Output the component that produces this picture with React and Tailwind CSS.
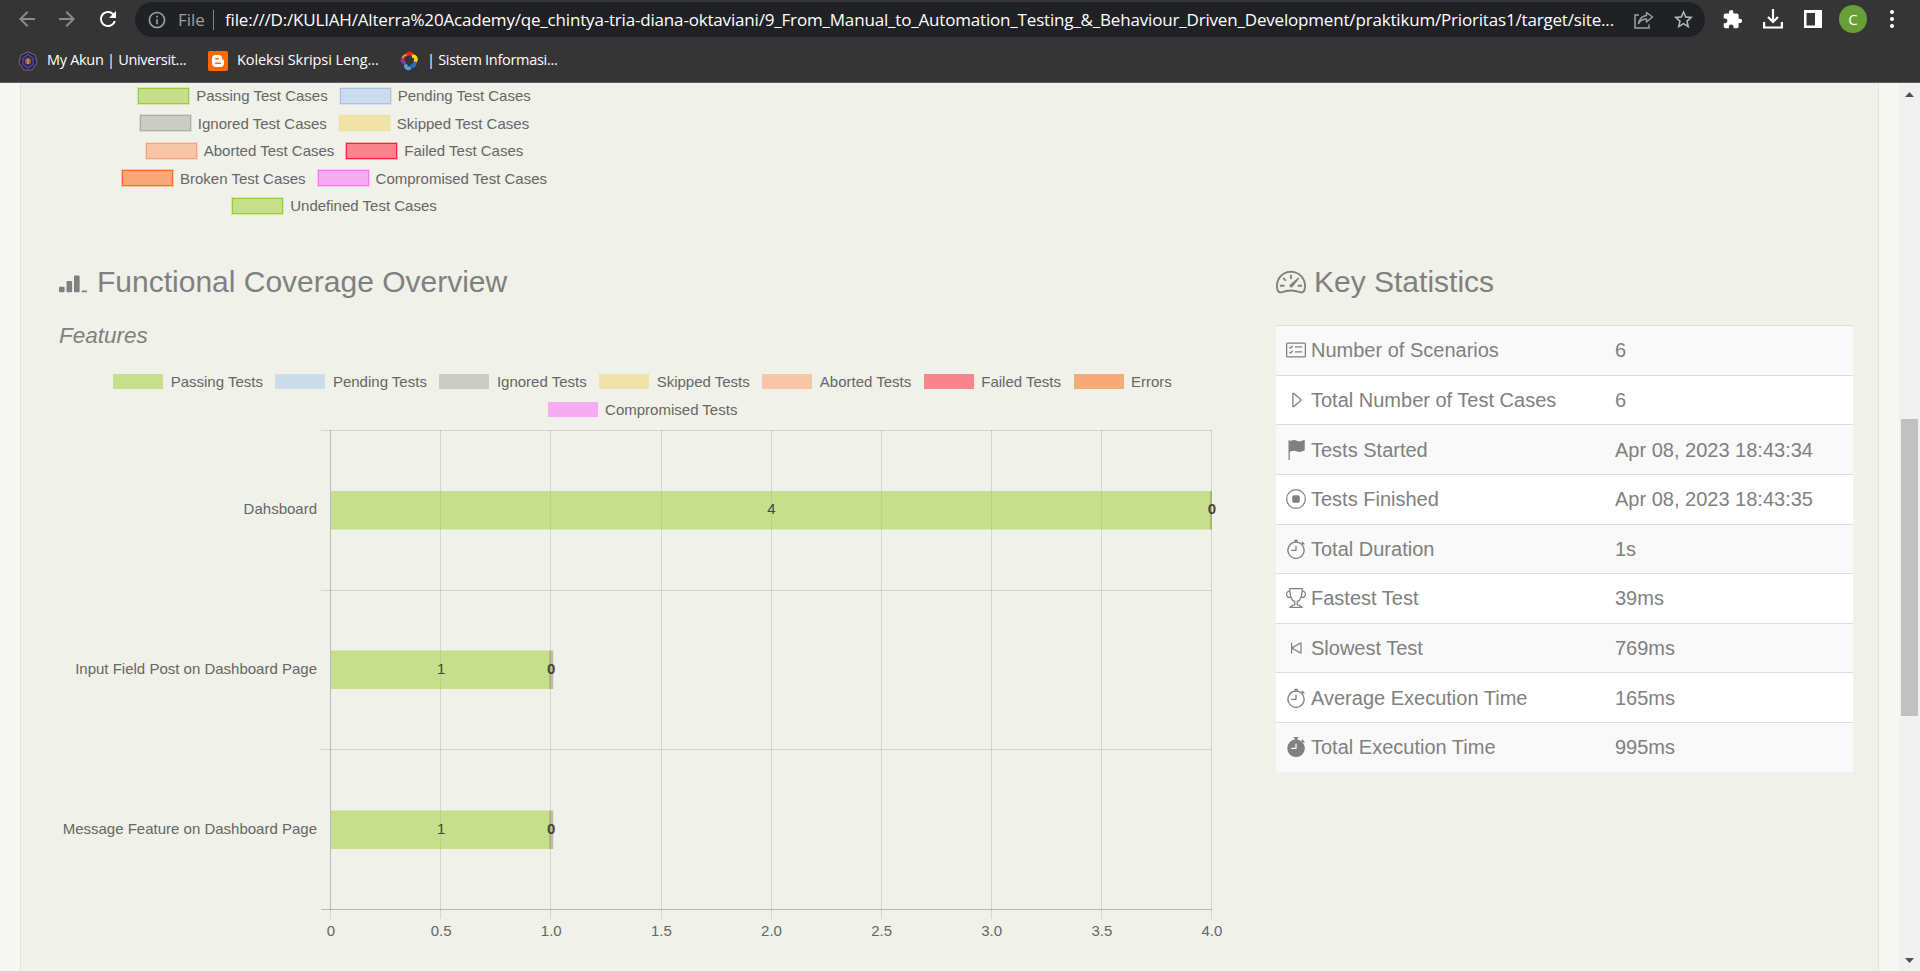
import React from "react";
import {
  BsReception3,
  BsSpeedometer2,
  BsCardChecklist,
  BsCaretRight,
  BsFlagFill,
  BsStopwatch,
  BsStopwatchFill,
  BsTrophy,
  BsSkipStart,
} from "react-icons/bs";
import {
  MdArrowBack,
  MdArrowForward,
  MdRefresh,
  MdInfoOutline,
  MdStarBorder,
  MdExtension,
} from "react-icons/md";

const caseLegend = [
  [
    ["Passing Test Cases", "bg-[#c6df8d] border-[#9acd32] outline-[#9acd32]/30"],
    ["Pending Test Cases", "bg-[#cbdcea] border-[#a4c4ee] outline-[#a4c4ee]/30"],
  ],
  [
    ["Ignored Test Cases", "bg-[#cbccc6] border-[#acada9] outline-[#acada9]/30"],
    ["Skipped Test Cases", "bg-[#efe3a9] border-[#eee2a0] outline-[#eee2a0]/30"],
  ],
  [
    ["Aborted Test Cases", "bg-[#f8c5a7] border-[#ffa070] outline-[#ffa070]/30"],
    ["Failed Test Cases", "bg-[#f8858e] border-[#ff1f3a] outline-[#ff1f3a]/30"],
  ],
  [
    ["Broken Test Cases", "bg-[#f8a978] border-[#ff6a13] outline-[#ff6a13]/30"],
    ["Compromised Test Cases", "bg-[#f7abf2] border-[#ff70ff] outline-[#ff70ff]/30"],
  ],
  [["Undefined Test Cases", "bg-[#c6df8d] border-[#9acd32] outline-[#9acd32]/30"]],
];

const testLegend = [
  [
    ["Passing Tests", "bg-[#c6df8d]"],
    ["Pending Tests", "bg-[#cbdcea]"],
    ["Ignored Tests", "bg-[#cbccc6]"],
    ["Skipped Tests", "bg-[#efe3a9]"],
    ["Aborted Tests", "bg-[#f8c5a7]"],
    ["Failed Tests", "bg-[#f8858e]"],
    ["Errors", "bg-[#f8a978]"],
  ],
  [["Compromised Tests", "bg-[#f7abf2]"]],
];

function StopCircle(props) {
  return (
    <svg viewBox="0 0 16 16" width="1em" height="1em" fill="currentColor" {...props}>
      <path d="M8 15A7 7 0 1 1 8 1a7 7 0 0 1 0 14zm0 1A8 8 0 1 0 8 0a8 8 0 0 0 0 16z" />
      <path d="M5 6.5A1.5 1.5 0 0 1 6.500 5h3A1.500 1.500 0 0 1 11 6.500v3A1.500 1.500 0 0 1 9.500 11h-3A1.500 1.500 0 0 1 5 9.500v-3z" />
    </svg>
  );
}

const stats = [
  [BsCardChecklist, "Number of Scenarios", "6"],
  [BsCaretRight, "Total Number of Test Cases", "6"],
  [BsFlagFill, "Tests Started", "Apr 08, 2023 18:43:34"],
  [StopCircle, "Tests Finished", "Apr 08, 2023 18:43:35"],
  [BsStopwatch, "Total Duration", "1s"],
  [BsTrophy, "Fastest Test", "39ms"],
  [BsSkipStart, "Slowest Test", "769ms"],
  [BsStopwatch, "Average Execution Time", "165ms"],
  [BsStopwatchFill, "Total Execution Time", "995ms"],
];

function Toolbar() {
  return (
    <div className="flex h-[39px] items-center pb-px">
      <div className="flex w-[135px] items-center pl-[15px] text-[24px]">
        <MdArrowBack className="text-[#8b8b8b]" />
        <MdArrowForward className="ml-4 text-[#8b8b8b]" />
        <MdRefresh className="ml-[17px] text-white" />
      </div>
      <div className="mt-px flex h-[35px] w-[1570px] items-center rounded-full bg-[#202124] pl-[12px]">
        <MdInfoOutline className="shrink-0 text-[20px] text-[#9aa0a6]" />
        <span className="ml-[11px] w-[35px] shrink-0 text-[17px] leading-none text-[#9aa0a6]">File</span>
        <span className="h-5 w-px shrink-0 bg-[#80868b]" />
        <span className="ml-[11px] w-[1394px] shrink-0 whitespace-nowrap text-[17px] leading-none tracking-[-0.18px] text-white">
          file:///D:/KULIAH/Alterra%20Academy/qe_chintya-tria-diana-oktaviani/9_From_Manual_to_Automation_Testing_&amp;_Behaviour_Driven_Development/praktikum/Prioritas1/target/site...
        </span>
        <svg width="20" height="18" viewBox="0 0 20 18" fill="none" stroke="#9aa0a6" strokeWidth="1.5" className="ml-[15px] shrink-0">
          <path d="M5 4H1v13h14v-3.500" />
          <path d="M12.500 1.500 18.500 6l-6 5V8C9 8 6.500 9.500 4.500 12.500 5.500 8 8 5 12.500 4.500z" strokeLinejoin="round" />
        </svg>
        <MdStarBorder className="ml-[18px] shrink-0 text-[23px] text-[#b5b8bc]" />
      </div>
      <div className="flex flex-1 items-center text-white">
        <MdExtension className="ml-[17px] text-[21px]" />
        <svg width="20" height="20" viewBox="0 0 20 20" fill="none" stroke="white" strokeWidth="2.200" className="ml-[20px]">
          <path d="M10 0v13M5 8l5 5 5-5M1.100 13v5.500h17.800V13" />
        </svg>
        <svg width="18" height="18" viewBox="0 0 18 18" className="ml-[21px]">
          <path d="M0 0h18v18H0zM2.500 3v12.500H11V3z" fill="white" fillRule="evenodd" />
        </svg>
        <span className="ml-[17px] flex size-7 items-center justify-center rounded-full bg-[#689f38] text-[15px]">C</span>
        <svg width="6" height="20" viewBox="0 0 6 20" fill="white" className="ml-[22px]">
          <circle cx="3" cy="3" r="2" />
          <circle cx="3" cy="10" r="2" />
          <circle cx="3" cy="17" r="2" />
        </svg>
      </div>
    </div>
  );
}

function Bookmarks() {
  return (
    <div className="flex h-[43px] items-center text-[14.5px] leading-none tracking-[-0.3px] whitespace-nowrap text-white">
      <div className="ml-[18px] flex w-[190px] items-center gap-[9px]">
        <svg width="20" height="20" viewBox="0 0 20 20">
          <path d="M10 .8 17.500 4.300 19 12l-4.800 7H5.800L1 12l1.500-7.700z" fill="#2b2350" stroke="#7d6a5a" strokeWidth="1" />
          <path d="M10 3.500 15 7v6.500L10 17l-5-3.500V7z" fill="none" stroke="#5a4ab8" strokeWidth="1.200" />
          <circle cx="10" cy="10.300" r="3.200" fill="#8a5a3c" />
          <path d="M10 7.500v5.600" stroke="#d8b048" strokeWidth="1.200" />
        </svg>
        My Akun | Universit...
      </div>
      <div className="flex w-[192px] items-center gap-[9px] tracking-[-0.08px]">
        <svg width="20" height="20" viewBox="0 0 20 20">
          <rect width="20" height="20" rx="2" fill="#ff6a00" />
          <path d="M7.500 4h3.300c2 0 3.400 1.500 3.400 3.400 0 1 .4 1.300 1.100 1.300.5 0 .7.300.7.800v3c0 2-1.500 3.500-3.500 3.500h-5C5.500 16 4 14.500 4 12.500v-5C4 5.500 5.500 4 7.500 4z" fill="white" />
          <path d="M7.800 7.800h2.500M7.800 12.200h4.400" stroke="#ff6a00" strokeWidth="1.600" strokeLinecap="round" />
        </svg>
        Koleksi Skripsi Leng...
      </div>
      <div className="flex items-center gap-[9px]">
        <svg width="18" height="20" viewBox="0 0 18 20" fill="none" strokeWidth="3.600">
          <path d="M7 4.500c1-3 5-3 5.500.8" stroke="#ea2127" />
          <path d="M12 5c4 .2 5 3 3 6" stroke="#f6d21c" />
          <path d="M14.500 11c1 3-1 4.500-4 4" stroke="#2a6ebb" />
          <path d="M10.500 16.500c-3 2-5.500.2-4.500-3.500" stroke="#4aa3df" />
          <path d="M6 12C2.500 12 1.500 9 3.500 6.500" stroke="#8e3b8e" />
          <path d="M2.500 7C3.500 4.500 5 4 7 4.200" stroke="#f08a1c" strokeWidth="2.200" />
        </svg>
        | Sistem Informasi...
      </div>
    </div>
  );
}

function CaseLegend() {
  return (
    <div className="-mt-px flex w-[551px] flex-col pb-px text-[15px] leading-[27.500px] text-[#666]">
      {caseLegend.map((row, i) => (
        <div key={i} className="flex h-[27.500px] items-center justify-center gap-[12px]">
          {row.map(([label, color]) => (
            <div key={label} className="flex items-center gap-[7px]">
              <span className={`h-[16px] w-[51px] border outline ${color}`} />
              {label}
            </div>
          ))}
        </div>
      ))}
    </div>
  );
}

function TestLegend() {
  return (
    <div className="flex flex-col text-[15px] leading-[28px] text-[#666]">
      {testLegend.map((row, i) => (
        <div key={i} className="flex h-[28px] items-center justify-center gap-[12.500px]">
          {row.map(([label, color]) => (
            <div key={label} className="flex items-center gap-[7.500px]">
              <span className={`h-[15px] w-[50px] ${color}`} />
              {label}
            </div>
          ))}
        </div>
      ))}
    </div>
  );
}

const X0 = 272;
const STEP = 110.12;
const bars = [
  { label: "Dahsboard", value: 4, y: 61.500 },
  { label: "Input Field Post on Dashboard Page", value: 1, y: 221 },
  { label: "Message Feature on Dashboard Page", value: 1, y: 381 },
];
const ticks = ["0", "0.5", "1.0", "1.5", "2.0", "2.5", "3.0", "3.5", "4.0"];

function CoverageChart() {
  return (
    <svg width="1180" height="530" viewBox="0 0 1180 530" className="block" fontSize="15" fill="#666">
      {bars.map((b) => (
        <text key={b.label} x={X0 - 14} y={b.y + 22.500} textAnchor="end">{b.label}</text>
      ))}
      {[0, 160, 319].map((y) => (
        <rect key={y} x={X0 - 10} y={y} width={STEP * 8 + 10} height="1" fill="#000" fillOpacity="0.11" />
      ))}
      <rect x={X0 - 10} y="479" width={STEP * 8 + 10} height="1" fill="#000" fillOpacity="0.22" />
      {ticks.map((t, i) => (
        <g key={t}>
          <rect x={Math.round(X0 + i * STEP - 0.8)} y="0" width="1" height="489" fill="#000" fillOpacity="0.11" />
          <text x={X0 + i * STEP} y="506" textAnchor="middle">{t}</text>
        </g>
      ))}
      <rect x={X0 - 1} y="0" width="1" height="480" fill="#000" fillOpacity="0.12" />
      {bars.map((b) => {
        const end = X0 + b.value * 2 * STEP;
        return (
          <g key={b.label}>
            <rect x={X0} y={b.y - 0.500} width={end - X0} height="38.500" fill="#9acd32" fillOpacity="0.5" />
            <rect x={end - 2} y={b.y - 0.500} width="2" height="38.500" fill="#8a9a50" fillOpacity="0.5" />
            {b.value < 4 && (
              <rect x={end} y={b.y - 0.500} width="2" height="38.500" fill="#a08080" fillOpacity="0.5" />
            )}
            <text x={(X0 + end) / 2} y={b.y + 22.500} textAnchor="middle" fill="#444">{b.value}</text>
            <text x={end} y={b.y + 22.500} textAnchor="middle" fill="#444" fontWeight="bold">0</text>
          </g>
        );
      })}
    </svg>
  );
}

function KeyStatistics() {
  return (
    <section className="w-[577px]">
      <h3 className="flex h-[40px] items-center gap-2 text-[30px] leading-none">
        <BsSpeedometer2 />
        Key Statistics
      </h3>
      <div className="mt-[23.500px] text-[20px]">
        {stats.map(([Icon, label, value]) => (
          <div key={label} className="flex h-[49.640px] items-center border-t border-[#dddddd] odd:bg-[#f9f9f9] even:bg-white">
            <div className="flex w-[339px] items-center gap-[5px] pl-[10px]">
              <Icon className="text-[20px]" />
              {label}
            </div>
            <div>{value}</div>
          </div>
        ))}
      </div>
    </section>
  );
}

function Scrollbar() {
  return (
    <div className="flex w-[21px] flex-col items-center bg-[#f1f1f1]">
      <svg width="21" height="21" viewBox="0 0 21 21"><path d="M6 14l4.500-5 4.500 5z" fill="#505050" /></svg>
      <div className="mt-[315px] h-[297px] w-[17px] bg-[#c1c1c1]" />
      <svg width="21" height="21" viewBox="0 0 21 21" className="mt-auto"><path d="M6 8l4.500 5L15 8z" fill="#505050" /></svg>
    </div>
  );
}

export default function App() {
  return (
    <div className="flex h-[971px] w-[1920px] flex-col overflow-hidden">
      <header className="relative h-[83px] shrink-0 border-b border-[#5f5f5f] bg-[#353535] font-['Open_Sans','Noto_Sans',sans-serif]">
        <Toolbar />
        <Bookmarks />
      </header>
      <div className="flex flex-1 bg-[#f7f8f3] font-['Liberation_Sans',Arial,sans-serif] text-[#808080]">
        <main className="ml-[20px] mr-[20px] w-[1859px] border-x border-[#e3e4de] bg-[#f0f1e8] pl-[38px]">
          <CaseLegend />
          <div className="flex">
            <section className="w-[1217px] pt-[41px]">
              <h3 className="flex h-[40px] items-center gap-[8px] text-[30px] leading-none">
                <BsReception3 className="mb-[2px]" />
                Functional Coverage Overview
              </h3>
              <h4 className="mt-[20px] text-[22.500px] leading-[27px] italic">Features</h4>
              <div className="mt-[19px] w-[1167px]">
                <TestLegend />
              </div>
              <div className="mt-[6px]">
                <CoverageChart />
              </div>
            </section>
            <div className="pt-[41px]">
              <KeyStatistics />
            </div>
          </div>
        </main>
        <Scrollbar />
      </div>
    </div>
  );
}
